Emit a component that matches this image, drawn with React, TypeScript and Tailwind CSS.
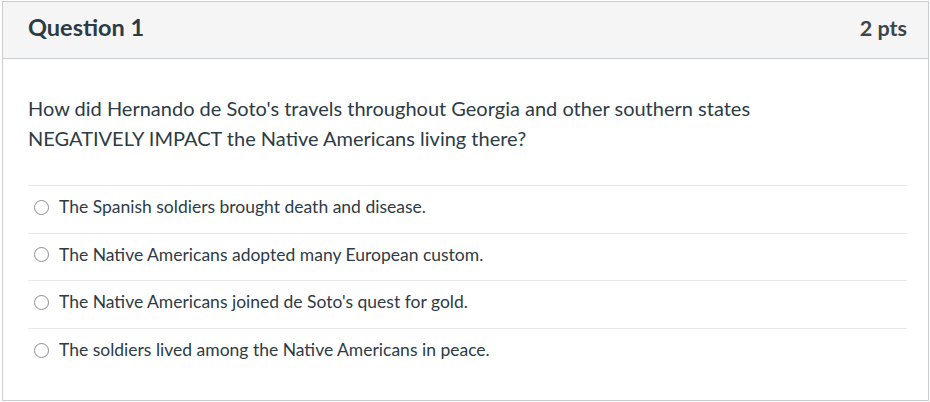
export default function App() {
  const answers = [
    "The Spanish soldiers brought death and disease.",
    "The Native Americans adopted many European custom.",
    "The Native Americans joined de Soto's quest for gold.",
    "The soldiers lived among the Native Americans in peace.",
  ];

  return (
    <div className="w-[930px] h-[402px] bg-white pt-px pl-[2px] font-['Lato','Noto_Sans',sans-serif] text-[#2d3b45]">
      <div className="w-[927px] h-[400px] border border-[#c7cdd1] flex flex-col">
        {/* Header */}
        <div className="h-[57px] bg-[#f5f5f5] border-b border-[#c7cdd1] flex items-center justify-between pl-[25px] pr-[21px] pb-[4px]">
          <h2 className="text-[23.5px] font-bold">Question 1</h2>
          <span className="text-[21.5px] font-bold text-[#3d454c]">2 pts</span>
        </div>

        {/* Body */}
        <div className="pl-[25px] pr-[21px] pt-[34px]">
          <p className="text-[20px] leading-[30px] w-[800px]">
            How did Hernando de Soto's travels throughout Georgia and other southern states NEGATIVELY IMPACT the Native Americans living there?
          </p>
          <div className="mt-[32px] border-t border-[#e6e9eb]">
            {answers.map((a, i) => (
              <label
                key={a}
                className={`flex items-center h-[47.5px] pb-[4px] ${i < answers.length - 1 ? "border-b border-[#e6e9eb]" : ""}`}
              >
                <span className="ml-[6px] w-[15px] h-[15px] rounded-full border border-[#8b8f93] bg-white" />
                <span className="ml-[10px] text-[17.5px] text-[#2d3b45]">{a}</span>
              </label>
            ))}
          </div>
        </div>
      </div>
    </div>
  );
}
